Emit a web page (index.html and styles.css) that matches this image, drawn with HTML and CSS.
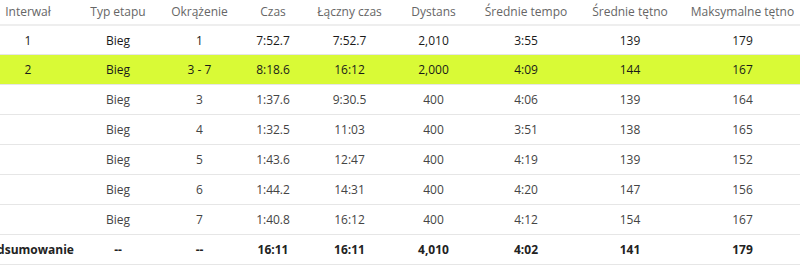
FILE: index.html
```html
<!DOCTYPE html>
<html lang="pl">
<head>
<meta charset="utf-8">
<link rel="stylesheet" href="styles.css">
</head>
<body>
<table class="laps">
  <colgroup>
    <col class="c1"><col class="c2"><col class="c3"><col class="c4"><col class="c5"><col class="c6"><col class="c7"><col class="c8"><col class="c9">
  </colgroup>
  <thead>
    <tr><th>Interwał</th><th>Typ etapu</th><th>Okrążenie</th><th>Czas</th><th>Łączny czas</th><th>Dystans</th><th>Średnie tempo</th><th>Średnie tętno</th><th>Maksymalne tętno</th></tr>
  </thead>
  <tbody>
    <tr class="interval"><td>1</td><td>Bieg</td><td>1</td><td>7:52.7</td><td>7:52.7</td><td>2,010</td><td>3:55</td><td>139</td><td>179</td></tr>
    <tr class="interval active"><td>2</td><td>Bieg</td><td>3 - 7</td><td>8:18.6</td><td>16:12</td><td>2,000</td><td>4:09</td><td>144</td><td>167</td></tr>
    <tr class="lap"><td></td><td>Bieg</td><td>3</td><td>1:37.6</td><td>9:30.5</td><td>400</td><td>4:06</td><td>139</td><td>164</td></tr>
    <tr class="lap"><td></td><td>Bieg</td><td>4</td><td>1:32.5</td><td>11:03</td><td>400</td><td>3:51</td><td>138</td><td>165</td></tr>
    <tr class="lap"><td></td><td>Bieg</td><td>5</td><td>1:43.6</td><td>12:47</td><td>400</td><td>4:19</td><td>139</td><td>152</td></tr>
    <tr class="lap"><td></td><td>Bieg</td><td>6</td><td>1:44.2</td><td>14:31</td><td>400</td><td>4:20</td><td>147</td><td>156</td></tr>
    <tr class="lap"><td></td><td>Bieg</td><td>7</td><td>1:40.8</td><td>16:12</td><td>400</td><td>4:12</td><td>154</td><td>167</td></tr>
    <tr class="summary"><td>Podsumowanie</td><td>--</td><td>--</td><td>16:11</td><td>16:11</td><td>4,010</td><td>4:02</td><td>141</td><td>179</td></tr>
  </tbody>
</table>
</body>
</html>
```
FILE: styles.css
```css
html, body {
  margin: 0;
  padding: 0;
  background: #fff;
  overflow: hidden;
}
body {
  font-family: "Open Sans", "Noto Sans", sans-serif;
  font-size: 12px;
  color: #333;
}
.laps {
  border-collapse: collapse;
  table-layout: fixed;
  width: 818px;
  margin-left: -18px;
}
.c1 { width: 92px; }
.c2 { width: 88px; }
.c3 { width: 75px; }
.c4 { width: 72px; }
.c5 { width: 81px; }
.c6 { width: 87px; }
.c7 { width: 98px; }
.c8 { width: 110px; }
.c9 { width: 115px; }
.laps th,
.laps td {
  text-align: center;
  padding: 0;
  white-space: nowrap;
}
.laps th {
  font-weight: 400;
  color: #666;
  height: 23px;
  vertical-align: middle;
  border-bottom: 2px solid #eeeeee;
  line-height: 16px;
  padding-bottom: 1px;
}
.laps td {
  height: 29px;
  border-bottom: 1px solid #e6e6e6;
}
.interval td {
  font-weight: 500;
  color: #1a1a1a;
}
.interval:first-child td {
  height: 28px;
}
.active td {
  background: #d9fa36;
}
.lap td {
  font-weight: 400;
  color: #444;
}
.summary td {
  font-weight: 700;
  color: #222;
}
```
